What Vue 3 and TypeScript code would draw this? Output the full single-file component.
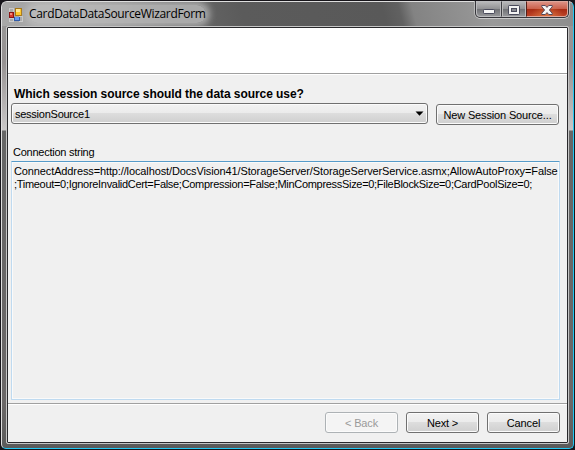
<script setup lang="ts">
import { ref } from 'vue'

const source = ref('sessionSource1')
const connectionLines: string[] = [
  'ConnectAddress=http://localhost/DocsVision41/StorageServer/StorageServerService.asmx;AllowAutoProxy=False',
  ';Timeout=0;IgnoreInvalidCert=False;Compression=False;MinCompressSize=0;FileBlockSize=0;CardPoolSize=0;',
]
</script>

<template>
  <div class="window">
    <div class="frame">
      <header class="titlebar">
        <svg class="app-icon" width="14" height="14" viewBox="0 0 14 14" shape-rendering="crispEdges">
          <path d="M0 0h4v4H0zM0 10h4v3H0zM10 8h3v5h-3z" fill="#aaa" stroke="#cacaca" stroke-width="1" />
          <rect x="0" y="4" width="5" height="6" fill="#8b1515" />
          <rect x="1" y="5" width="3" height="4" fill="#d93a2c" />
          <rect x="1" y="5" width="2" height="2" fill="#f28b7b" />
          <rect x="6" y="0" width="7" height="8" fill="#a87512" />
          <rect x="7" y="1" width="5" height="6" fill="#ffc928" />
          <rect x="7" y="1" width="4" height="3" fill="#ffe794" />
          <rect x="5" y="9" width="6" height="4" fill="#315ba8" />
          <rect x="6" y="9" width="4" height="3" fill="#669bf0" />
        </svg>
        <h1 class="title"><span>CardDataDataSourceWizardForm</span></h1>
        <div class="controls">
          <button class="control min" aria-label="Minimize">
            <svg width="12" height="5" viewBox="0 0 12 5"><rect x=".5" y=".5" width="11" height="4" rx=".7" fill="#f5f5f5" stroke="#4a4b5c" /></svg>
          </button>
          <button class="control max" aria-label="Maximize">
            <svg width="12" height="10" viewBox="0 0 12 10"><rect x=".5" y=".5" width="11" height="9" rx=".7" fill="#f2f2f2" stroke="#4a4b5c" /><rect x="3.5" y="3.5" width="5" height="3" fill="#888990" stroke="#4a4b5c" /></svg>
          </button>
          <button class="control close" aria-label="Close">
            <svg width="12" height="10" viewBox="0 0 12 10"><path d="M.8.5h3.5L6 2.4 7.7.5h3.5v1.3L8.4 5l2.8 3.2v1.3H7.7L6 7.6 4.3 9.5H.8V8.2L3.6 5 .8 1.8z" fill="#f5f5f5" stroke="#55475a" /></svg>
          </button>
        </div>
      </header>

      <main class="client">
        <div class="banner"></div>
        <section class="page">
          <h2 class="question"><span>Which session source should the data source use?</span></h2>
          <div class="source-row">
            <div class="combo" role="combobox">
              <span class="source-name">{{ source }}</span>
              <svg width="9" height="5" viewBox="0 0 9 5"><path d="M.5.5h8L4.5 4.7z" fill="#000" /></svg>
            </div>
            <button class="btn new-source"><span>New Session Source...</span></button>
          </div>
          <div class="label"><span>Connection string</span></div>
          <div class="textbox">
            <div v-for="(line, i) in connectionLines" :key="i" class="line" :class="{ second: i === 1 }"><span>{{ line }}</span></div>
          </div>
        </section>
        <footer class="footer">
          <button class="btn nav" disabled><span>&lt; Back</span></button>
          <button class="btn nav"><span>Next &gt;</span></button>
          <button class="btn nav"><span>Cancel</span></button>
        </footer>
      </main>
    </div>
  </div>
</template>

<style>
body { background: #17151a; overflow: hidden; }
</style>

<style scoped>
* { box-sizing: border-box; }
.window {
  width: 575px;
  height: 450px;
  padding: 1px;
  background: #17151a;
  font: 11px/13px "Liberation Sans", Arial, sans-serif;
  letter-spacing: -.25px;
  color: #000;
}
.frame {
  height: 448px;
  padding: 0 4px 4px 4px;
  border: 1px solid #dedede;
  border-right-color: #22c9f5;
  border-bottom-color: #22c9f5;
  border-radius: 6px 6px 5px 5px;
  background: linear-gradient(180deg, #999 0, #969292 60px, #c9c7c7 128px, #666 129px, #6b6868 400px, #5b5b5b 100%);
}
.titlebar {
  display: flex;
  height: 24px;
  margin: 0 -4px;
  padding-left: 7px;
  background: linear-gradient(75deg, #a8a8a8 0, #a2a2a2 60px, #858585 120px, #6a6a6a 165px, #5b5b5b 235px, #595959 372px, #616161 388px, #838383 401px, #999 475px, #8d8d8d 100%);
  border-radius: 5px 5px 0 0;
}
.app-icon { margin-top: 6px; flex: none; }
.title {
  margin: 0 0 0 6px;
  font: 12px/24px "Open Sans", "Noto Sans", sans-serif;
  letter-spacing: -.33px;
  white-space: nowrap;
}
.title span {
  display: block;
  height: 18px;
  margin-top: 3px;
  line-height: 18px;
  border-radius: 9px;
  background: rgba(192, 192, 192, .75);
  box-shadow: 0 0 7px 4px rgba(192, 192, 192, .75);
  clip-path: inset(-3px -14px -3px -14px);
}
.controls {
  display: flex;
  width: 94px;
  height: 17px;
  margin: -1px 4px 0 auto;
  border: 1px solid #36363b;
  border-top: 0;
  border-radius: 0 0 5px 5px;
  box-shadow: 0 1px 0 #c9c9c9, -1px 0 0 #b9b9b9, 1px 0 0 #bbb;
  overflow: hidden;
}
.control {
  display: flex;
  align-items: center;
  justify-content: center;
  padding: 1px 0 0;
  border: 1px solid #bbbbbe;
  background: linear-gradient(#b7b7b9 0, #929295 48%, #707175 50%, #949598 100%);
}
.min { width: 25px; padding-top: 5px; border-radius: 0 0 0 4px; }
.max { width: 25px; border-left-color: #3e3e43; box-shadow: inset 1px 0 #bbb; }
.close { width: 42px; border-color: #dda79b; border-left-color: #541f18; border-radius: 0 0 4px 0; background: radial-gradient(ellipse at 50% 110%, rgba(240,150,80,.65), transparent 60%), linear-gradient(#dc9083 0, #ca614d 47%, #a62a12 49%, #bc4327 100%); }
.client {
  display: flex;
  flex-direction: column;
  height: 418px;
  width: 563px;
  border: 1px solid #c6c6c6;
  border-radius: 2px;
  padding: 1px;
  background: #f0f0f0;
  box-shadow: inset 0 0 0 1px #29292c;
}
.banner { height: 47px; border-bottom: 1px solid #fff; box-shadow: inset 0 -1px #a0a0a0; background: #fff; flex: none; }
.page { padding: 11px 7px 0 3px; height: 328px; flex: none; }
.question { height: 17px; margin: 0; padding: 1px 0 0 3px; font: bold 12px/15px "Liberation Sans", Arial, sans-serif; white-space: nowrap; letter-spacing: -.06px; }
.source-row { display: flex; justify-content: space-between; height: 22px; padding-right: 1px; }
.combo, .btn {
  border: 1px solid #707070;
  border-radius: 3px;
  background: linear-gradient(#f2f2f2 0, #ebebeb 49%, #dddddd 50%, #cfcfcf 100%);
  box-shadow: inset 0 0 0 1px #fbfbfb;
}
.combo { display: flex; align-items: center; justify-content: space-between; width: 417px; height: 21px; padding: 0 3px; }
.source-name { padding-top: 2px; }
.btn { padding: 2px 0 0; font: 11px/13px "Liberation Sans", Arial, sans-serif; letter-spacing: -.15px; color: #000; height: 21px; white-space: nowrap; }
.btn:disabled { color: #9a9a9a; border-color: #adb2b5; background: #f4f4f4; }
.new-source { width: 123px; margin-top: 1px; }
.label { margin-top: 21px; height: 15px; padding-left: 2px; }
.textbox { height: 239px; padding: 3px 2px; border: 1px solid #bfdaf0; border-top-color: #569bc9; border-radius: 1px; box-shadow: inset 0 0 0 1px #fafafa; }
.line { height: 13px; white-space: nowrap; letter-spacing: -.12px; }
.line.second { letter-spacing: -.3px; }
.footer { display: flex; justify-content: flex-end; gap: 8px; height: 39px; padding: 8px 7px 0 0; border-top: 1px solid #a0a0a0; box-shadow: inset 0 1px #fff; }
.nav { width: 73px; }
</style>
